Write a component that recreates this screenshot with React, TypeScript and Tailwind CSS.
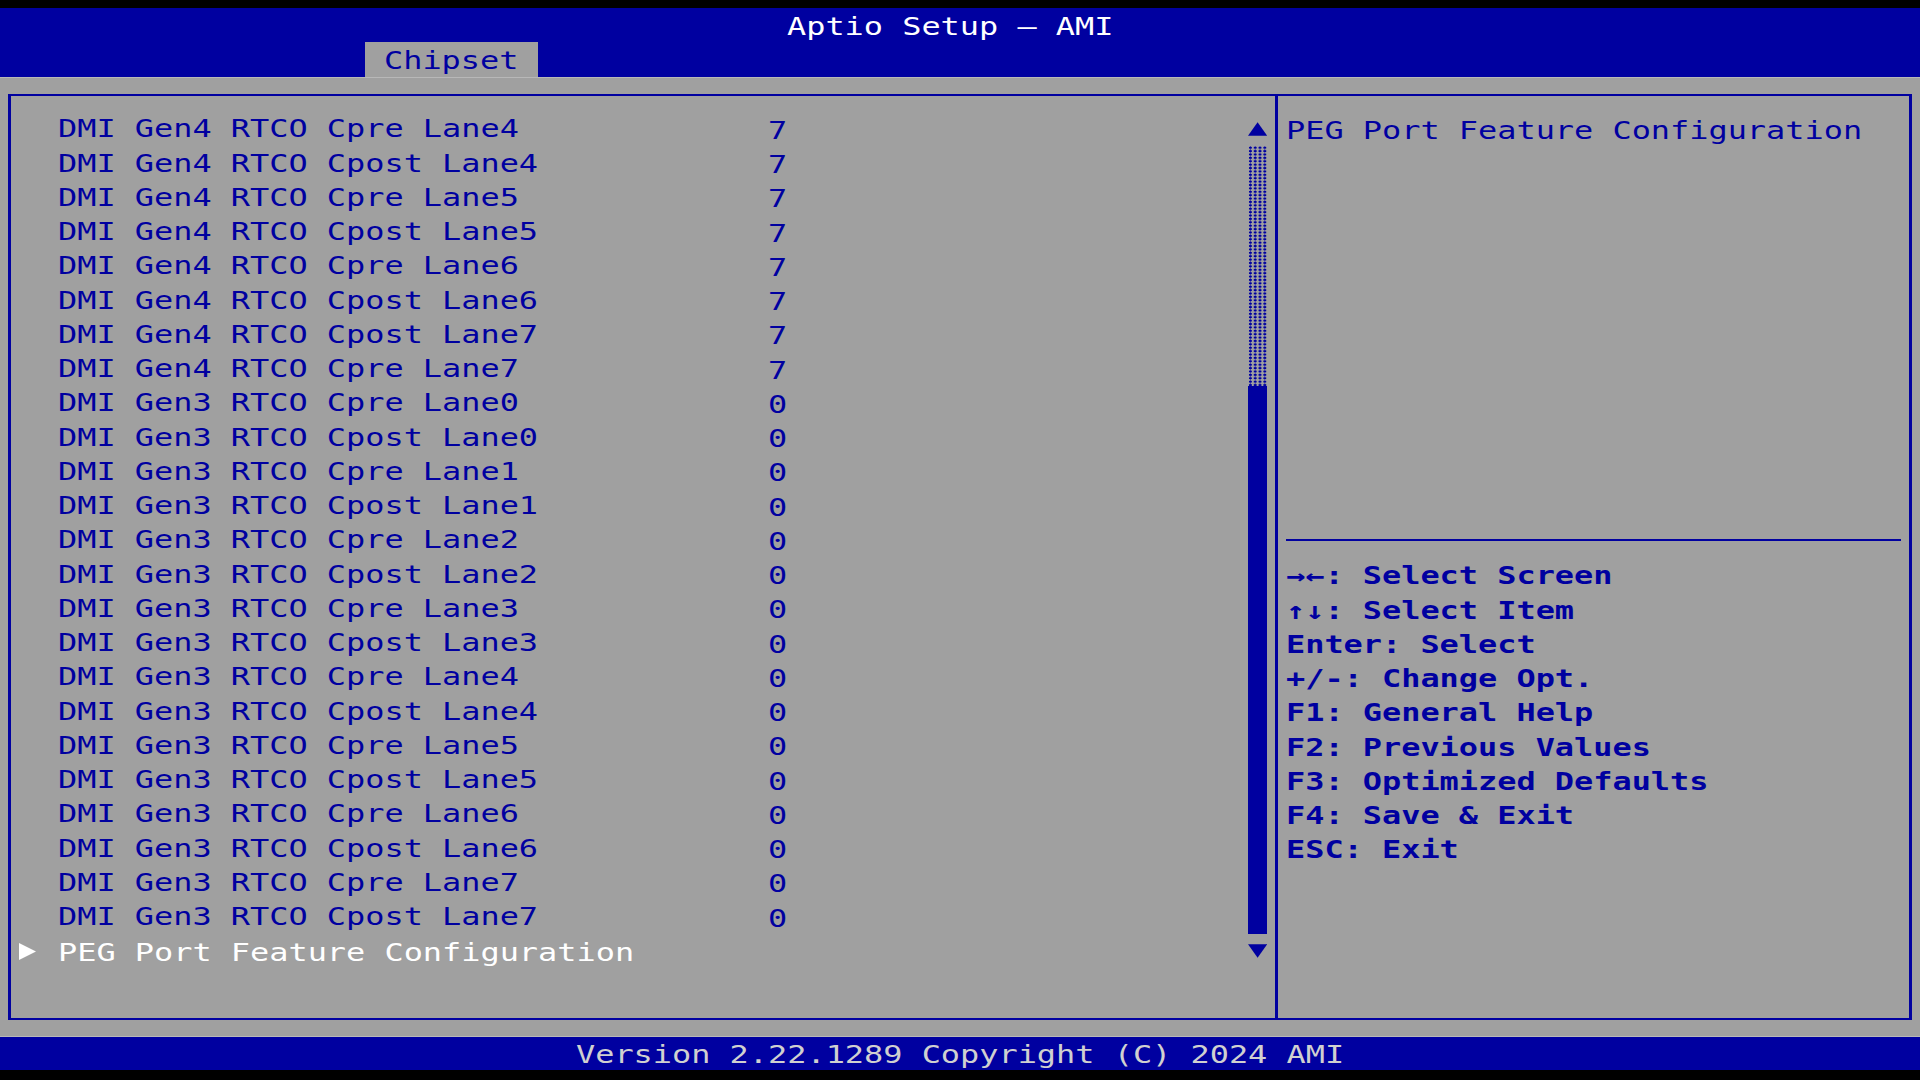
import type { ReactNode } from "react";

type Setting = { label: string; value: string };

const gen4: Setting[] = [
  { label: "DMI Gen4 RTCO Cpre Lane4", value: "7" },
  { label: "DMI Gen4 RTCO Cpost Lane4", value: "7" },
  { label: "DMI Gen4 RTCO Cpre Lane5", value: "7" },
  { label: "DMI Gen4 RTCO Cpost Lane5", value: "7" },
  { label: "DMI Gen4 RTCO Cpre Lane6", value: "7" },
  { label: "DMI Gen4 RTCO Cpost Lane6", value: "7" },
  { label: "DMI Gen4 RTCO Cpost Lane7", value: "7" },
  { label: "DMI Gen4 RTCO Cpre Lane7", value: "7" },
];

const gen3: Setting[] = [0, 1, 2, 3, 4, 5, 6, 7].flatMap((lane) => [
  { label: `DMI Gen3 RTCO Cpre Lane${lane}`, value: "0" },
  { label: `DMI Gen3 RTCO Cpost Lane${lane}`, value: "0" },
]);

const settings = [...gen4, ...gen3];

const helpKeys = [
  "→←: Select Screen",
  "↑↓: Select Item",
  "Enter: Select",
  "+/-: Change Opt.",
  "F1: General Help",
  "F2: Previous Values",
  "F3: Optimized Defaults",
  "F4: Save & Exit",
  "ESC: Exit",
];

// BIOS text cell is 19.2 x 34.26 px; glyphs are stretched sideways
function Txt({ children, className = "" }: { children: ReactNode; className?: string }) {
  return (
    <span
      className={`inline-block origin-left scale-x-[1.329] translate-y-[2px] text-[24px] leading-none whitespace-pre ${className}`}
    >
      {children}
    </span>
  );
}

function Row({ children }: { children: ReactNode }) {
  return <div className="h-[34.26px] flex items-center">{children}</div>;
}

function ScrollBar() {
  return (
    <div className="w-[19.2px] mr-[8.1px] flex flex-col shrink-0">
      <div className="h-[34.26px] flex items-center justify-center">
        <svg width="20" height="14" viewBox="0 0 20 14">
          <polygon points="10,0 20,14 0,14" fill="#0000a0" />
        </svg>
      </div>
      <div className="h-[239.82px] bg-[radial-gradient(circle,#0000a0_1.1px,transparent_1.5px)] bg-[length:4.8px_3.4px]" />
      <div className="h-[548.16px] bg-[#0000a0]" />
      <div className="h-[34.26px] flex items-center justify-center">
        <svg width="20" height="14" viewBox="0 0 20 14">
          <polygon points="0,0 20,0 10,14" fill="#0000a0" />
        </svg>
      </div>
    </div>
  );
}

export default function App() {
  return (
    <div className="w-[1920px] h-[1080px] bg-black flex flex-col overflow-hidden font-['DejaVu_Sans_Mono','Liberation_Mono',monospace]">
      <div className="h-[8px] shrink-0" />

      {/* Title + tab strip */}
      <header className="bg-[#0000a0] shrink-0">
        <div className="h-[34.26px] pl-[787.2px] flex items-center">
          <Txt className="text-white">Aptio Setup – AMI</Txt>
        </div>
        <div className="h-[34.26px] pl-[364.8px] flex">
          <div className="w-[172.8px] h-full bg-[#a0a0a0] pl-[19.2px] flex items-center">
            <Txt className="text-[#0000a0]">Chipset</Txt>
          </div>
        </div>
      </header>

      {/* Main frame */}
      <main className="bg-[#a0a0a0] h-[959.28px] shrink-0 pt-[16px] pb-[16.2px] px-[8px] border-t border-[#b8b8b8]">
        <div className="h-full flex border-x-[3px] border-y-2 border-[#0000a0]">
          {/* Settings list */}
          <div className="w-[1264.3px] flex pt-[16.3px]">
            <div className="flex-1 pl-[8.2px] flex flex-col">
              {settings.map((s) => (
                <Row key={s.label}>
                  <div className="w-[38.4px]" />
                  <div className="w-[710.4px]">
                    <Txt className="text-[#0000a0]">{s.label}</Txt>
                  </div>
                  <Txt className="text-[#0000a0]">{s.value}</Txt>
                </Row>
              ))}
              <Row>
                <div className="w-[38.4px] flex items-center translate-y-[1px]">
                  <svg width="17" height="17" viewBox="0 0 17 17">
                    <polygon points="0,0 17,8.5 0,17" fill="#ffffff" />
                  </svg>
                </div>
                <Txt className="text-white">PEG Port Feature Configuration</Txt>
              </Row>
            </div>
            <ScrollBar />
          </div>

          {/* Help panel */}
          <div className="flex-1 border-l-[3px] border-[#0000a0] pl-[8.1px] pt-[16.3px] flex flex-col">
            <Row>
              <Txt className="text-[#0000a0]">PEG Port Feature Configuration</Txt>
            </Row>
            <div className="h-[376.86px]" />
            <Row>
              <div className="w-[614.4px] h-[2px] bg-[#0000a0]" />
            </Row>
            {helpKeys.map((k) => (
              <Row key={k}>
                <Txt className="text-[#0000a0] font-bold">{k}</Txt>
              </Row>
            ))}
          </div>
        </div>
      </main>

      {/* Footer */}
      <footer className="bg-[#0000a0] h-[34.26px] shrink-0 pl-[576px] flex items-center border-t border-[#b8b8b8]">
        <Txt className="text-[#d0d0d0]">Version 2.22.1289 Copyright (C) 2024 AMI</Txt>
      </footer>
    </div>
  );
}
